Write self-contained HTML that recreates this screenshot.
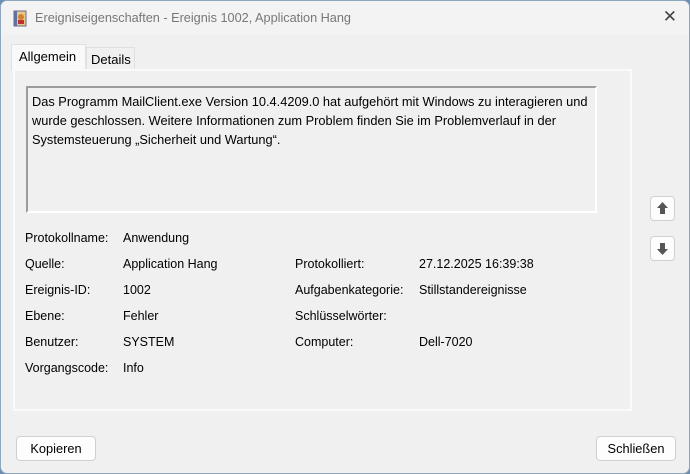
<!DOCTYPE html>
<html><head><style>
*{margin:0;padding:0;box-sizing:border-box}
body{width:690px;height:474px;background:#6b8db0;font-family:"Liberation Sans",sans-serif;font-size:12.5px;color:#000;overflow:hidden;position:relative}
.win{position:absolute;left:0;top:0;width:690px;height:474px;background:#f0f0f0;border:1px solid #8fa6bf;border-radius:7px;overflow:hidden}
.title{position:absolute;left:0;top:0;width:100%;height:34px;background:#f3f3f3}
.title span{position:absolute;left:34px;top:10px;font-size:12.7px;color:#777}
.x{position:absolute;right:12px;top:6px;font-size:17px;color:#444}
.a{position:absolute;white-space:nowrap}
.tab1{position:absolute;left:10px;top:43px;width:75px;height:26px;background:#f9f9f9;border:1px solid #e0e0e0;border-bottom:none}
.tab2{position:absolute;left:85px;top:46px;width:49px;height:22px;background:#f0f0f0;border:1px solid #e0e0e0;border-bottom:none}
.panel{position:absolute;left:12px;top:68px;width:619px;height:342px;border:2px solid #fafafa}
.tb{position:absolute;left:25px;top:85px;width:571px;height:127px;border:2px solid #9c9c9c;border-right-color:#fff;border-bottom-color:#fff;background:#f0f0f0;padding:4px 4px;line-height:19px;font-size:12.8px}
.btn{position:absolute;background:#fdfdfd;border:1px solid #d0d0d0;border-radius:4px;text-align:center;font-size:12.8px}
.sq{position:absolute;left:649px;width:25px;height:25px;background:#fdfdfd;border:1px solid #d0d0d0;border-radius:4px}
</style></head><body><div class="win">
<div class="title"><svg style="position:absolute;left:11px;top:9px" width="16" height="17"><rect x="2" y="1" width="12" height="15" fill="#e8c888" stroke="#6a6a8a"/><rect x="2" y="1" width="3" height="15" fill="#6070a0"/><circle cx="9" cy="7" r="3" fill="#d08030"/><rect x="6" y="10" width="6" height="4" fill="#c03030"/></svg><span>Ereigniseigenschaften - Ereignis 1002, Application Hang</span><div class="x">✕</div></div>
<div class="tab2"></div><div class="tab1"></div>
<div class="a" style="left:18px;top:48px;font-size:13px">Allgemein</div>
<div class="a" style="left:90px;top:51px;font-size:13px">Details</div>
<div class="panel"></div>
<div class="tb">Das Programm MailClient.exe Version 10.4.4209.0 hat aufgehört mit Windows zu interagieren und wurde geschlossen. Weitere Informationen zum Problem finden Sie im Problemverlauf in der Systemsteuerung „Sicherheit und Wartung“.</div>
<div class="a" style="left:24px;top:230px">Protokollname:</div><div class="a" style="left:122px;top:230px">Anwendung</div>
<div class="a" style="left:24px;top:256px">Quelle:</div><div class="a" style="left:122px;top:256px">Application Hang</div>
<div class="a" style="left:24px;top:282px">Ereignis-ID:</div><div class="a" style="left:122px;top:282px">1002</div>
<div class="a" style="left:24px;top:308px">Ebene:</div><div class="a" style="left:122px;top:308px">Fehler</div>
<div class="a" style="left:24px;top:334px">Benutzer:</div><div class="a" style="left:122px;top:334px">SYSTEM</div>
<div class="a" style="left:24px;top:360px">Vorgangscode:</div><div class="a" style="left:122px;top:360px">Info</div>
<div class="a" style="left:294px;top:256px">Protokolliert:</div><div class="a" style="left:418px;top:256px">27.12.2025 16:39:38</div>
<div class="a" style="left:294px;top:282px">Aufgabenkategorie:</div><div class="a" style="left:418px;top:282px">Stillstandereignisse</div>
<div class="a" style="left:294px;top:308px">Schlüsselwörter:</div>
<div class="a" style="left:294px;top:334px">Computer:</div><div class="a" style="left:418px;top:334px">Dell-7020</div>
<div class="sq" style="top:195px"><svg width="23" height="23"><path d="M11.5 5 L17 11 H14 V17 H9 V11 H6 Z" fill="#555"/></svg></div>
<div class="sq" style="top:235px"><svg width="23" height="23"><path d="M11.5 18 L17 12 H14 V6 H9 V12 H6 Z" fill="#555"/></svg></div>
<div class="btn" style="left:15px;top:435px;width:80px;height:25px;line-height:23px">Kopieren</div>
<div class="btn" style="left:595px;top:435px;width:80px;height:25px;line-height:23px">Schließen</div>
</div></body></html>
